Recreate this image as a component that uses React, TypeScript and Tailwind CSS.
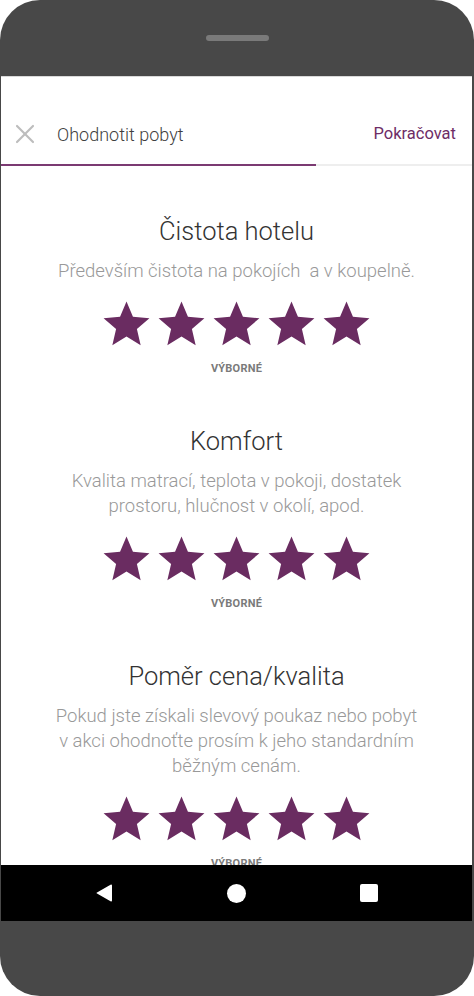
import { X } from "lucide-react";

const sections = [
  {
    title: "Čistota hotelu",
    lines: ["Především čistota na pokojích  a v koupelně."],
  },
  {
    title: "Komfort",
    lines: ["Kvalita matrací, teplota v pokoji, dostatek", "prostoru, hlučnost v okolí, apod."],
  },
  {
    title: "Poměr cena/kvalita",
    lines: [
      "Pokud jste získali slevový poukaz nebo pobyt",
      "v akci ohodnoťte prosím k jeho standardním",
      "běžným cenám.",
    ],
  },
];

function Star() {
  return (
    <svg width="55" height="55" viewBox="0 0 24 24">
      <path
        fill="#6a2c61"
        d="M12 17.27L18.18 21l-1.64-7.03L22 9.24l-7.19-.61L12 2 9.19 8.63 2 9.24l5.46 4.73L5.82 21z"
      />
    </svg>
  );
}

export default function App() {
  return (
    <div className="w-[474px] h-[996px] bg-white font-['Roboto',sans-serif]">
      <div className="w-[474px] h-[996px] bg-[#484848] rounded-[40px] overflow-hidden flex flex-col">
        {/* Top bezel */}
        <div className="h-[76px] flex justify-center pt-[35px] shrink-0">
          <div className="w-[63px] h-[6px] rounded-full bg-[#7a7a7a]" />
        </div>

        {/* Screen */}
        <div className="h-[789px] ml-[1px] mr-[2px] bg-white border-t border-[#d9d9d9] overflow-hidden flex flex-col shrink-0">
          <div className="h-[87px] flex items-center pt-[27px] shrink-0">
            <X size={32} strokeWidth={1.6} className="text-[#bdbdbd] ml-[8px]" />
            <span className="ml-[16px] text-[18px] font-light text-[#3f3f3f]">Ohodnotit pobyt</span>
            <span className="ml-auto mr-[16px] text-[16.5px] text-[#6e2d66]">Pokračovat</span>
          </div>
          <div className="h-[2px] flex shrink-0">
            <div className="w-[315px] bg-[#7b3a72]" />
            <div className="flex-1 bg-[#eeeeee]" />
          </div>

          <div className="flex flex-col items-center">
            {sections.map((s) => (
              <div key={s.title} className="flex flex-col items-center pt-[49px]">
                <h2 className="text-[25.5px] leading-[32px] font-light text-[#333333]">{s.title}</h2>
                <p className="mt-[12px] text-[18.5px] leading-[25px] font-light text-[#999999] text-center">
                  {s.lines.map((l, i) => (
                    <span key={i} className="block whitespace-pre">
                      {l}
                    </span>
                  ))}
                </p>
                <div className="mt-[13px] flex">
                  {[0, 1, 2, 3, 4].map((i) => (
                    <Star key={i} />
                  ))}
                </div>
                <div className="mt-[10px] text-[11px] leading-[14px] font-bold text-[#7a7a7a] tracking-[0.02em]">
                  VÝBORNÉ
                </div>
              </div>
            ))}
          </div>
        </div>

        {/* Nav bar */}
        <div className="h-[56px] ml-[1px] mr-[2px] bg-black flex items-center shrink-0">
          <div className="flex-1 flex justify-center ml-[-20px]">
            <svg width="17" height="18" viewBox="0 0 17 18">
              <path d="M16 1.5v15a1 1 0 0 1-1.5.8L1 9.6a.7.7 0 0 1 0-1.2L14.5.7A1 1 0 0 1 16 1.5z" fill="white" />
            </svg>
          </div>
          <div className="w-[19px] h-[19px] rounded-full bg-white" />
          <div className="flex-1 flex justify-center mr-[-20px]">
            <div className="w-[18px] h-[18px] rounded-[2px] bg-white" />
          </div>
        </div>

        <div className="flex-1" />
      </div>
    </div>
  );
}
